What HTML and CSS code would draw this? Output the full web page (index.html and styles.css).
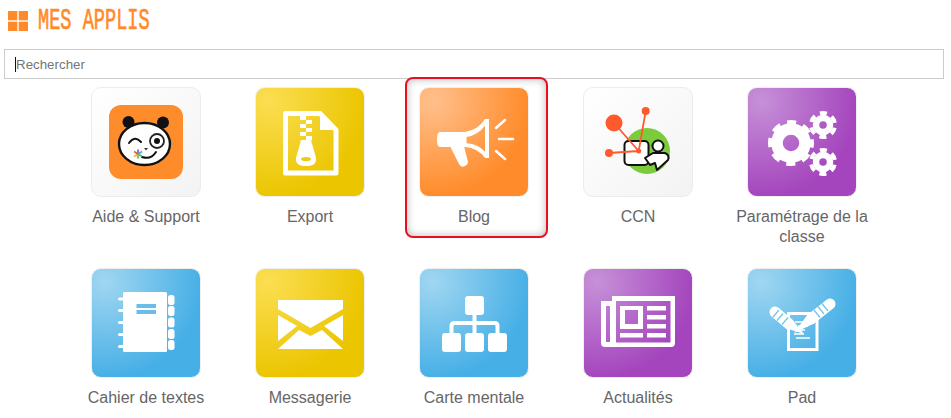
FILE: index.html
```html
<!DOCTYPE html>
<html lang="fr">
<head>
<meta charset="utf-8">
<title>Mes applis</title>
<link rel="stylesheet" href="styles.css">
</head>
<body>
<header class="title">
  <svg class="title-icon" viewBox="0 0 20 20"><rect x="0" y="0" width="9.3" height="9.3"/><rect x="10.7" y="0" width="9.3" height="9.3"/><rect x="0" y="10.7" width="9.3" height="9.3"/><rect x="10.7" y="10.7" width="9.3" height="9.3"/></svg>
  <h1 class="title-text">MES APPLIS</h1>
</header>
<div class="search"><input class="search-input" type="text" placeholder="Rechercher"></div>
<main class="apps">
  <a class="app">
    <div class="tile tile-plain"><svg viewBox="0 0 108 108">
      <rect x="17" y="17" width="74" height="74" rx="12" fill="#ff8c2b"/>
      <circle cx="36.500" cy="34" r="6" fill="#111"/><circle cx="71" cy="34.500" r="6" fill="#111"/>
      <ellipse cx="52.500" cy="56" rx="25.500" ry="21" fill="#fff" stroke="#111" stroke-width="2.400"/>
      <path d="M37 55q6-8 12-1" fill="none" stroke="#111" stroke-width="2" stroke-linecap="round"/>
      <circle cx="65" cy="53" r="7" fill="#fff" stroke="#222" stroke-width="1.800"/><circle cx="65" cy="53" r="3" fill="#111"/>
      <path d="M52 60h4l-2 2.500z" fill="#333"/>
      <path d="M50 69q9 3 14-5" fill="none" stroke="#111" stroke-width="2" stroke-linecap="round"/>
      <path d="M46 66V61.500" stroke="#9b59c6" stroke-width="1.800"/><path d="M46 66L50 63.500" stroke="#4aa8e0" stroke-width="1.800"/><path d="M46 66L50 68.500" stroke="#3fb8b0" stroke-width="1.800"/><path d="M46 66V70.500" stroke="#6cc04a" stroke-width="1.800"/><path d="M46 66L42 68.500" stroke="#f2b632" stroke-width="1.800"/><path d="M46 66L42 63.500" stroke="#e0604a" stroke-width="1.800"/>
    </svg></div>
    <span class="app-label">Aide &amp; Support</span>
  </a>
  <a class="app">
    <div class="tile tile-yellow"><svg viewBox="0 0 108 108">
      <path class="line" stroke-width="5" stroke-linejoin="round" d="M29.500 25.500H64L80 42V85H29.500Z"/>
      <path class="shape" d="M64 25L81 42H64Z"/>
      <rect class="shape" x="44" y="28" width="6" height="4"/><rect class="shape" x="50" y="32" width="6" height="4"/><rect class="shape" x="44" y="36" width="6" height="4"/><rect class="shape" x="50" y="40" width="6" height="4"/><rect class="shape" x="44" y="44" width="6" height="4"/><rect class="shape" x="50" y="48" width="6" height="4"/>
      <path class="shape" d="M45 52H55L60 70Q61 78 50 78Q39 78 40 70Z"/>
      <ellipse cx="50" cy="71" rx="5" ry="2" fill="#eecb14"/>
    </svg></div>
    <span class="app-label">Export</span>
  </a>
  <a class="app app-selected">
    <div class="tile tile-orange"><svg viewBox="0 0 108 108">
      <path class="shape" fill-rule="evenodd" d="M20 44H45Q58 42 65 31H69V70H65Q58 60 45 59H20Q17 59 17 51.500Q17 44 20 44ZM46.500 49V55.300Q58 56 65 63.700V37.700Q58 47 46.500 49Z"/>
      <path class="shape" d="M30 58H44L47.500 72Q49 76 45 78Q41 80 39 76Z"/>
      <path class="line" stroke="#ffb277" stroke-width="1.500" d="M23 49H32M23 53H32"/>
      <path class="line round" stroke-width="2.500" d="M76 40L85 32M79 51H93M76 63L85 71"/>
    </svg></div>
    <span class="app-label">Blog</span>
  </a>
  <a class="app">
    <div class="tile tile-plain"><svg viewBox="0 0 108 108">
      <circle cx="63" cy="63" r="23" fill="#7bcb3c"/>
      <rect x="40.500" y="53" width="24" height="24" rx="4" fill="#fff" stroke="#111" stroke-width="2"/>
      <circle cx="74" cy="58" r="5.500" fill="#fff" stroke="#111" stroke-width="2"/>
      <path d="M61 70L69 65H81Q86 67 84 72L73 82L71 75L66 77Z" fill="#fff" stroke="#111" stroke-width="2" stroke-linejoin="round"/>
      <path d="M30 35L54.700 63L61.700 23M25 65L54.700 63" fill="none" stroke="#ff5a2d" stroke-width="1.800"/>
      <circle cx="30" cy="35" r="8.500" fill="#ff5a2d"/><circle cx="61.700" cy="23" r="4" fill="#ff5a2d"/><circle cx="25" cy="65" r="4" fill="#ff5a2d"/><circle cx="54.700" cy="63" r="2.500" fill="#ff5a2d"/>
    </svg></div>
    <span class="app-label">CCN</span>
  </a>
  <a class="app">
    <div class="tile tile-purple"><svg viewBox="0 0 108 108">
      <circle class="line" cx="43" cy="55" r="14" stroke-width="11.500"/>
      <circle class="line" cx="43" cy="55" r="20.500" stroke-width="5" stroke-dasharray="9 7.100" stroke-dashoffset="4.500"/>
      <circle class="line" cx="75" cy="37" r="7" stroke-width="6.500"/>
      <circle class="line" cx="75" cy="37" r="12" stroke-width="4" stroke-dasharray="7 5.570" stroke-dashoffset="-2.780"/>
      <circle class="line" cx="75" cy="74" r="7" stroke-width="6.500"/>
      <circle class="line" cx="75" cy="74" r="12" stroke-width="4" stroke-dasharray="7 5.570" stroke-dashoffset="-2.780"/>
    </svg></div>
    <span class="app-label">Paramétrage de la classe</span>
  </a>
  <a class="app">
    <div class="tile tile-blue"><svg viewBox="0 0 108 108">
      <rect class="shape" x="31" y="23" width="44" height="60" rx="1.500"/>
      <rect class="shape" x="76" y="26" width="6.500" height="10" rx="2.500"/><rect class="shape" x="76" y="37" width="6.500" height="10" rx="2.500"/><rect class="shape" x="76" y="48.500" width="6.500" height="10" rx="2.500"/><rect class="shape" x="76" y="60" width="6.500" height="10" rx="2.500"/><rect class="shape" x="76" y="71" width="6.500" height="10" rx="2.500"/>
      <rect class="shape" x="26" y="28.500" width="9" height="3" rx="1.500"/><rect class="shape" x="26" y="40" width="9" height="3" rx="1.500"/><rect class="shape" x="26" y="52" width="9" height="3" rx="1.500"/><rect class="shape" x="26" y="64" width="9" height="3" rx="1.500"/><rect class="shape" x="26" y="76" width="9" height="3" rx="1.500"/>
      <rect x="44.500" y="35" width="19.500" height="4" fill="#6bbde9"/><rect x="44.500" y="41" width="19.500" height="4" fill="#6bbde9"/>
    </svg></div>
    <span class="app-label">Cahier de textes</span>
  </a>
  <a class="app">
    <div class="tile tile-yellow"><svg viewBox="0 0 108 108">
      <path class="shape" d="M22 31H87V40L54.500 59L22 40Z"/>
      <path class="shape" d="M22 46L41 57L22 72Z"/>
      <path class="shape" d="M87 46L68 57L87 72Z"/>
      <path class="shape" d="M22 80L43 61L54.500 67L66 61L87 80Z"/>
    </svg></div>
    <span class="app-label">Messagerie</span>
  </a>
  <a class="app">
    <div class="tile tile-blue"><svg viewBox="0 0 108 108">
      <rect class="shape" x="45" y="27" width="19" height="19" rx="3"/>
      <rect class="shape" x="22" y="64" width="19" height="19" rx="3"/><rect class="shape" x="45" y="64" width="19" height="19" rx="3"/><rect class="shape" x="68" y="64" width="19" height="19" rx="3"/>
      <path class="line" stroke-width="4" d="M54.500 46V64M31.500 64V57Q31.500 54 34.500 54H74.500Q77.500 54 77.500 57V64"/>
    </svg></div>
    <span class="app-label">Carte mentale</span>
  </a>
  <a class="app">
    <div class="tile tile-purple"><svg viewBox="0 0 108 108">
      <path class="shape" fill-rule="evenodd" d="M17 32H28V27H91V74Q91 78 87 78H21Q17 78 17 74ZM22 37V73H26V37ZM32 32V73.500H86.500V32Z"/>
      <path class="shape" fill-rule="evenodd" d="M36 37H59V60H36ZM41 41V55H54V41Z"/>
      <rect class="shape" x="63" y="37" width="19" height="4.500"/><rect class="shape" x="63" y="46" width="19" height="4.500"/><rect class="shape" x="63" y="55" width="19" height="4.500"/><rect class="shape" x="63" y="64" width="19" height="4.500"/><rect class="shape" x="36" y="64" width="23" height="4.500"/>
    </svg></div>
    <span class="app-label">Actualités</span>
  </a>
  <a class="app">
    <div class="tile tile-blue"><svg viewBox="0 0 108 108">
      <path class="line" stroke-width="3" d="M40.500 44.500H69V80.500H40.500Z"/>
      <path class="line" stroke-width="1.500" d="M47 53H58M50 57H60M47 61H57M46 65H56M48 69H62"/>
      <path class="line round" stroke-width="11" d="M27 43L41 55"/>
      <path class="line round" stroke-width="11" d="M82 35L63 50"/>
      <path class="shape" d="M37.400 59.100L44.600 50.900L56 65Z"/>
      <path class="shape" d="M66.500 54.300L59.500 45.700L46 64Z"/>
      <path class="line band" stroke-width="1.300" d="M25 48L31 41M29 51.500L35 44.500M34 55.500L40 48.500"/>
      <path class="line band" stroke-width="1.300" d="M74 34.500L80 42M70 37.500L76 45M66 41L72 48.500"/>
    </svg></div>
    <span class="app-label">Pad</span>
  </a>
</main>
</body>
</html>
```
FILE: styles.css
```css
*, *::before, *::after { box-sizing: border-box; }
html, body { margin: 0; background: #fff; }
body { font-family: "Liberation Sans", Arial, sans-serif; color: #666; padding: 0 7px 0 4px; }

.title { display: flex; align-items: flex-start; gap: 10px; padding: 11px 0 0 4px; height: 49px; }
.title-icon { width: 20px; height: 20px; fill: #ff8a29; display: block; flex: none; }
.title-text { margin: -4px 0 0; font-family: "Liberation Mono", monospace; font-weight: 400; font-size: 30px; line-height: 29px; color: #ff8a29; -webkit-text-stroke: 0.7px #ff8a29; white-space: nowrap; transform: scaleX(0.62); transform-origin: left center; }

.search { position: relative; margin-bottom: 8px; }
.search::before { content: ""; position: absolute; left: 11px; top: 8px; width: 1px; height: 15px; background: #111; }
.search-input { display: block; width: 100%; height: 30px; border: 1px solid #ccc; padding: 0 11px; font-family: "Liberation Sans", Arial, sans-serif; font-size: 13.333px; outline: none; background: #fff; }
.search-input::placeholder { color: #757575; opacity: 1; }

.apps { display: grid; grid-template-columns: repeat(5, 164px); justify-content: center; row-gap: 21px; }
.app { position: relative; display: flex; flex-direction: column; align-items: center; text-align: center; padding: 0 27px; }
.app-label { display: block; margin: 10px -16px 0; font-size: 16px; line-height: 20px; color: #666; }

.tile { width: 110px; height: 110px; border: 1px solid #eee; border-radius: 10px; overflow: hidden; flex: none; }
.tile svg { display: block; width: 108px; height: 108px; }
.tile-plain { background: linear-gradient(135deg, #fff, #f3f3f3); border-color: #ececec; }
.tile-yellow { background: radial-gradient(circle at 12% 12%, #fbde52, #ebc500 72%); }
.tile-orange { background: radial-gradient(circle at 12% 12%, #ffc08c, #ff8b2a 72%); }
.tile-purple { background: radial-gradient(circle at 12% 12%, #c690d8, #a445bd 72%); }
.tile-blue { background: radial-gradient(circle at 12% 12%, #a0d6f1, #46afe6 72%); }

.shape { fill: #fff; }
.line { fill: none; stroke: #fff; }
.line.band { stroke: #78c4ec; }
.round { stroke-linecap: round; }

.app-selected::after { content: ""; position: absolute; left: 13px; top: -10px; width: 143px; height: 161px; border: 2px solid #e8101e; border-radius: 8px; box-shadow: inset 0 0 9px rgba(0, 0, 0, 0.28); pointer-events: none; }
```
